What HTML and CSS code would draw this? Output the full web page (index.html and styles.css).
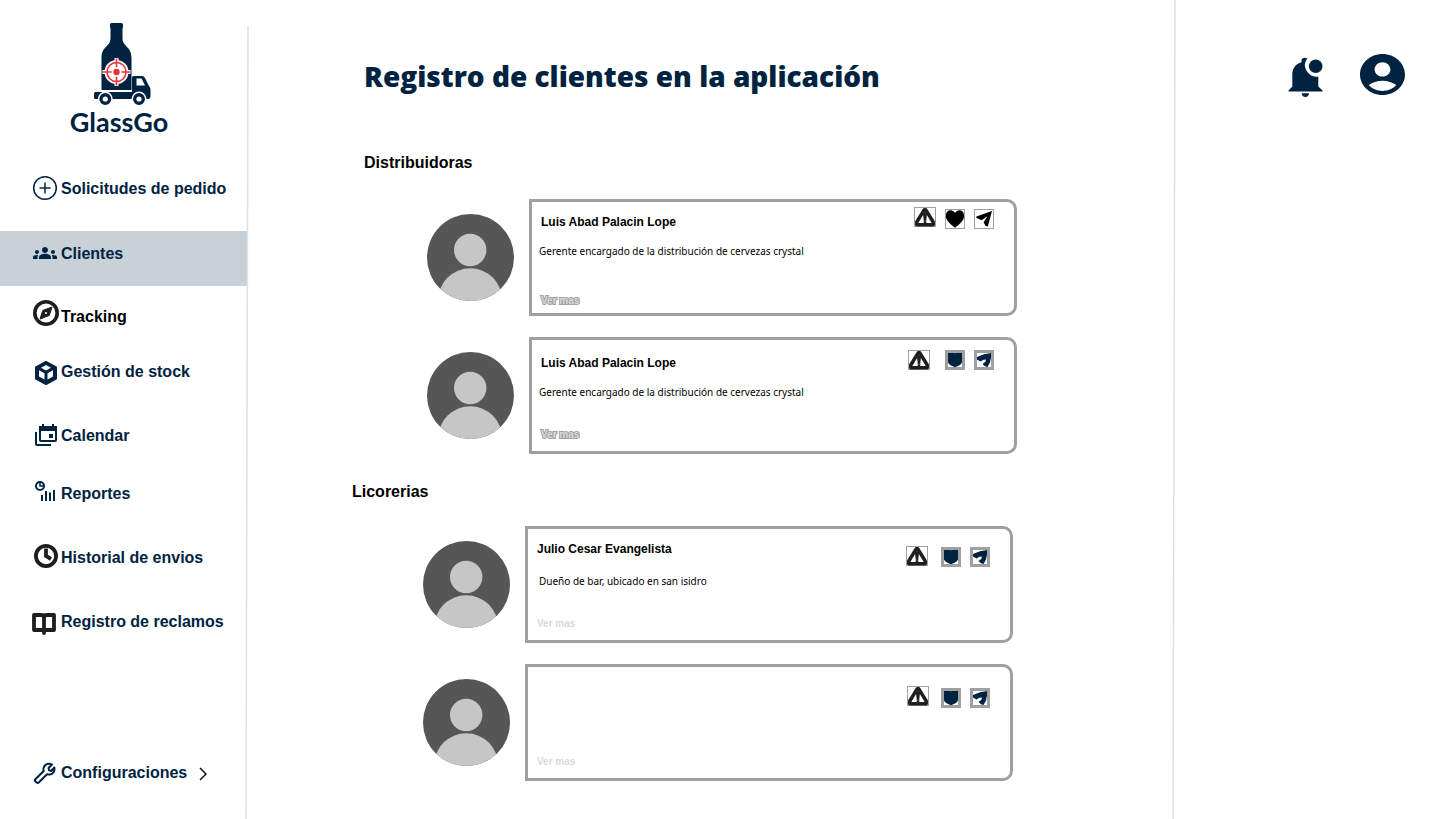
FILE: index.html
```html
<!DOCTYPE html>
<html lang="es">
<head>
<meta charset="utf-8">
<meta name="viewport" content="width=device-width, initial-scale=1">
<title>GlassGo - Clientes</title>
<link rel="stylesheet" href="styles.css">
</head>
<body>
<svg class="sprite" aria-hidden="true">
  <symbol id="avatar" viewBox="-0.5 0.5 88 88">
    <clipPath id="disc"><circle cx="44" cy="44" r="43.5"/></clipPath>
    <circle cx="44" cy="44" r="43.5" fill="#565656"/>
    <circle cx="43.7" cy="36.5" r="16.2" fill="#c6c6c6"/>
    <circle cx="43.7" cy="86.7" r="32" fill="#c6c6c6" clip-path="url(#disc)"/>
  </symbol>
  <symbol id="alert" viewBox="0 0 22 20">
    <path d="M10.200 2.800 2.800 15V17.800H19.200V15L11.800 2.800Z" fill="none" stroke="#1e1e1e" stroke-width="3.500" stroke-linejoin="round"/>
    <path d="M8.500 3H13.500L12.300 13V17H9.700V13Z" fill="#1e1e1e"/>
    <path d="M11 13.600v1.300M11 5.400v.7" stroke="#777" stroke-width="1"/>
  </symbol>
  <symbol id="heart" viewBox="0 0 20 20">
    <path d="M10 4C8.500 1.200 5.500 .8 3.500 1.700 1 3 .5 6.500 1.300 9.500 2.500 12.500 7 16.500 10 18.800 13 16.500 17.500 12.500 18.700 9.500 19.500 6.500 19 3 16.500 1.700 14.500.8 11.500 1.200 10 4Z"/>
  </symbol>
  <symbol id="shield" viewBox="0 0 20 20">
    <path d="M3 3H9.500L10 3.500 10.500 3H17V12.500C16 14.500 14.500 15.200 13.500 15.800L10 17.200 6.500 15.800C5.500 15.200 4 14.500 3 12.500Z"/>
  </symbol>
  <symbol id="send" viewBox="0 0 20 20">
    <path d="M18 2 13.800 17.500 11.600 17 9.600 13.300 13.500 7.300 7.500 11.200 2.300 8.800V7.600Z"/>
  </symbol>
  <symbol id="send-small" viewBox="0 0 20 20">
    <path d="M17 3V7.500L16 12.500 13.500 17 11 16.300 8.500 14 11.500 11.800 11.800 9.500 9.500 9.800 6.500 11.500 3 9.500V7L10 4.200Z"/>
  </symbol>
</svg>

<div class="app">
  <aside class="sidebar">
    <a class="brand" href="#">
      <svg class="brand-art" viewBox="0 0 58 84" aria-hidden="true">
        <g fill="#002341">
          <path d="M16 1.500Q16 0 17.500 0H27.500Q29 0 29 1.500V4Q29 5 28.500 5V15C28.500 24 37.500 23 37.500 35V67H7.500V35C7.500 23 16.500 24 16.500 15V5Q16 5 16 4Z"/>
          <path d="M1.500 69H38V54.500Q38 53 39.500 53H48Q50 53 51 55L55 63Q56.500 64.500 56.500 67V73Q56.500 76 54 76H1.500Q0 76 0 74.500V70.500Q0 69 1.500 69Z"/>
        </g>
        <path d="M42.500 55.500H47.500L51 62.500H42.500Z" fill="#fff"/>
        <g fill="#002341" stroke="#fff" stroke-width="1.500">
          <circle cx="11.300" cy="76" r="6.700"/><circle cx="45" cy="76" r="6.700"/>
        </g>
        <circle cx="11.300" cy="76" r="2.600" fill="#fff"/><circle cx="45" cy="76" r="2.600" fill="#fff"/>
        <circle cx="22.500" cy="49" r="12" fill="#fff"/>
        <path d="M22.500 35V63M8.500 49H36.500" stroke="#fff" stroke-width="4"/>
        <circle cx="22.500" cy="49" r="9.500" fill="none" stroke="#ee3338" stroke-width="1.600"/>
        <path d="M22.500 35.500V44M22.500 54V62.500M9 49H17.500M27.500 49H36" stroke="#ee3338" stroke-width="1.600"/>
        <circle cx="22.500" cy="49" r="3.200" fill="#ee3338"/>
      </svg>
      <span class="brand-name">GlassGo</span>
    </a>

    <nav class="nav">
      <a class="nav-item" href="#">
        <svg class="nav-icon" viewBox="0 0 28 28"><g fill="none" stroke="#002341" stroke-width="1.500"><circle cx="13" cy="14" r="11.300"/><path d="M13 8.500V19.500M7.500 14H18.500"/></g></svg>
        <span class="nav-label">Solicitudes de pedido</span>
      </a>
      <a class="nav-item nav-item--active" href="#" aria-current="page">
        <svg class="nav-icon" viewBox="0 0 28 28"><path transform="translate(1 2)" fill="#002341" d="M12 12.750c1.630 0 3.070.39 4.240.9 1.080.48 1.760 1.560 1.760 2.730V18H6v-1.610c0-1.180.68-2.260 1.760-2.730 1.170-.52 2.610-.91 4.240-.91zM4 13c1.100 0 2-.9 2-2s-.9-2-2-2-2 .9-2 2 .9 2 2 2zm1.130 1.100c-.37-.06-.74-.1-1.130-.1-.99 0-1.930.21-2.780.58C.48 14.900 0 15.620 0 16.430V18h4.500v-1.610c0-.83.23-1.610.63-2.290zM20 13c1.100 0 2-.9 2-2s-.9-2-2-2-2 .9-2 2 .9 2 2 2zm4 3.430c0-.81-.48-1.530-1.220-1.850-.85-.37-1.790-.58-2.780-.58-.39 0-.76.04-1.130.1.4.68.63 1.460.63 2.290V18H24v-1.570zM12 6c1.660 0 3 1.340 3 3s-1.340 3-3 3-3-1.340-3-3 1.340-3 3-3z"/></svg>
        <span class="nav-label">Clientes</span>
      </a>
      <a class="nav-item nav-item--dark nav-item--near" href="#">
        <svg class="nav-icon" viewBox="0 0 28 28"><circle cx="14" cy="11" r="11.200" fill="none" stroke="#1e1e1e" stroke-width="3.600"/><path d="M20 5 17.300 13.500 8 17 10.700 8.500Z" fill="#1e1e1e" stroke="#1e1e1e" stroke-linejoin="round"/><circle cx="14" cy="11" r="1.100" fill="#fff"/></svg>
        <span class="nav-label">Tracking</span>
      </a>
      <a class="nav-item nav-item--mid" href="#">
        <svg class="nav-icon" viewBox="0 0 28 28"><path d="M14 5 24 10.500V21.500L14 27 4 21.500V10.500Z" fill="#002341" stroke="#002341" stroke-width="2" stroke-linejoin="round"/><path d="M14 8 19 10.800 14 13.500 9 10.800ZM7 13.300 12.500 16.300V22.500L7 19.500ZM21 13.300 15.500 16.300V22.500L21 19.500Z" fill="#fff"/></svg>
        <span class="nav-label">Gestión de stock</span>
      </a>
      <a class="nav-item nav-item--far" href="#">
        <svg class="nav-icon" viewBox="0 0 28 28"><g fill="none" stroke="#002341" stroke-width="2"><rect x="8" y="6" width="16" height="14" rx="1"/><path d="M4 11V23Q4 24 5 24H19"/></g><path d="M7 5H25V10H7ZM10 3H12V6H10ZM20 3H22V6H20ZM17 13H21V17H17Z" fill="#002341"/></svg>
        <span class="nav-label">Calendar</span>
      </a>
      <a class="nav-item nav-item--open" href="#">
        <svg class="nav-icon" viewBox="0 0 28 28"><g fill="none" stroke="#002341" stroke-width="2"><circle cx="8" cy="7" r="4"/><path d="M8 3.500V7H11.500" stroke-width="1.500"/><path d="M10 16V22M14 12V22M18 13.500V22M22 11V22"/></g></svg>
        <span class="nav-label">Reportes</span>
      </a>
      <a class="nav-item nav-item--far" href="#">
        <svg class="nav-icon" viewBox="0 0 28 28"><g fill="none" stroke="#1e1e1e" stroke-width="3.800"><circle cx="14" cy="13" r="10.100"/><path d="M14 5.500V13L19 16"/></g></svg>
        <span class="nav-label">Historial de envios</span>
      </a>
      <a class="nav-item nav-item--far" href="#">
        <svg class="nav-icon" viewBox="0 0 28 28"><path d="M2 8H9Q12 8 12 10.500Q12 8 15 8H22V23H14Q12 23 12 25Q12 23 10 23H2ZM12 10V26" fill="none" stroke="#1e1e1e" stroke-width="3.800" stroke-linejoin="round" stroke-linecap="round"/></svg>
        <span class="nav-label">Registro de reclamos</span>
      </a>
      <a class="nav-item nav-item--bottom" href="#">
        <svg class="nav-icon" viewBox="0 0 28 28"><path d="M20 6.500 16.500 10 17 12.300 19.300 13 22.300 9.500C23.500 15 19 17.500 15 16.200L7 24.200C5 26 1.800 23 3.600 21L11.700 13C10.300 8.500 14.500 4 20 6.500Z" fill="none" stroke="#002341" stroke-width="2" stroke-linejoin="round"/></svg>
        <span class="nav-label">Configuraciones</span>
        <svg class="nav-chevron" viewBox="0 0 8 14"><path d="M1 1 7 7 1 13" fill="none" stroke="#111" stroke-width="1.500"/></svg>
      </a>
    </nav>
    <svg class="divider divider--nav" aria-hidden="true"><line x1="3" y1="0" x2="1" y2="100%"/></svg>
  </aside>

  <main class="main">
    <h1 class="title">Registro de clientes en la aplicación</h1>

    <section class="group group--first">
      <h2 class="group-title">Distribuidoras</h2>
      <div class="rows">
        <article class="row">
          <svg class="avatar" role="img" aria-label="Foto de perfil"><use href="#avatar"/></svg>
          <div class="card card--raised">
            <div class="card-body">
              <h3 class="name">Luis Abad Palacin Lope</h3>
              <p class="desc">Gerente encargado de la distribución de cervezas crystal</p>
              <button class="more more--outlined" type="button">Ver mas</button>
            </div>
            <div class="actions">
              <button class="action action--alert" type="button" aria-label="Alerta"><svg><use href="#alert"/></svg></button>
              <button class="action" type="button" aria-label="Favorito"><svg><use href="#heart"/></svg></button>
              <button class="action" type="button" aria-label="Enviar"><svg><use href="#send"/></svg></button>
            </div>
          </div>
        </article>
        <article class="row">
          <svg class="avatar" role="img" aria-label="Foto de perfil"><use href="#avatar"/></svg>
          <div class="card card--level">
            <div class="card-body">
              <h3 class="name">Luis Abad Palacin Lope</h3>
              <p class="desc">Gerente encargado de la distribución de cervezas crystal</p>
              <button class="more more--outlined" type="button">Ver mas</button>
            </div>
            <div class="actions">
              <button class="action action--alert" type="button" aria-label="Alerta"><svg><use href="#alert"/></svg></button>
              <button class="action action--thick" type="button" aria-label="Favorito"><svg><use href="#shield"/></svg></button>
              <button class="action action--thick" type="button" aria-label="Enviar"><svg><use href="#send-small"/></svg></button>
            </div>
          </div>
        </article>
      </div>
    </section>

    <section class="group group--second">
      <h2 class="group-title">Licorerias</h2>
      <div class="rows">
        <article class="row">
          <svg class="avatar" role="img" aria-label="Foto de perfil"><use href="#avatar"/></svg>
          <div class="card card--store">
            <div class="card-body">
              <h3 class="name">Julio Cesar Evangelista</h3>
              <p class="desc">Dueño de bar, ubicado en san isidro</p>
              <button class="more" type="button">Ver mas</button>
            </div>
            <div class="actions">
              <button class="action action--alert" type="button" aria-label="Alerta"><svg><use href="#alert"/></svg></button>
              <button class="action action--thick" type="button" aria-label="Favorito"><svg><use href="#shield"/></svg></button>
              <button class="action action--thick" type="button" aria-label="Enviar"><svg><use href="#send-small"/></svg></button>
            </div>
          </div>
        </article>
        <article class="row">
          <svg class="avatar" role="img" aria-label="Foto de perfil"><use href="#avatar"/></svg>
          <div class="card card--store card--empty">
            <div class="card-body">
              <button class="more" type="button">Ver mas</button>
            </div>
            <div class="actions">
              <button class="action action--alert" type="button" aria-label="Alerta"><svg><use href="#alert"/></svg></button>
              <button class="action action--thick" type="button" aria-label="Favorito"><svg><use href="#shield"/></svg></button>
              <button class="action action--thick" type="button" aria-label="Enviar"><svg><use href="#send-small"/></svg></button>
            </div>
          </div>
        </article>
      </div>
    </section>
  </main>

  <aside class="tools">
    <svg class="divider divider--tools" aria-hidden="true"><line x1="3" y1="0" x2="1" y2="100%"/></svg>
    <button class="tool" type="button" aria-label="Notificaciones">
      <svg class="tool-bell" viewBox="0 0 36 42"><g fill="#002341"><path d="M.5 34.600V33.500L4.300 29.500V18C4.300 11.500 7.500 7 13.500 5.300V3.500C13.500.8 16.500 0 19.300 1.300A11.500 11.500 0 0 0 30.300 19.500V29.500L34.600 33.500V34.600Z"/><path d="M13.700 36.300H21C21 38.500 19.500 40 17.400 40S13.700 38.500 13.700 36.300Z"/><circle cx="27.700" cy="9.300" r="6.800"/></g></svg>
    </button>
    <button class="tool" type="button" aria-label="Mi cuenta">
      <svg class="tool-user" viewBox="2 2 20 20" preserveAspectRatio="none"><path fill="#002341" d="M12 2C6.480 2 2 6.480 2 12s4.480 10 10 10 10-4.480 10-10S17.520 2 12 2zm0 4c1.930 0 3.500 1.570 3.500 3.500S13.930 13 12 13s-3.500-1.570-3.500-3.500S10.070 6 12 6zm0 14c-2.030 0-4.430-.82-6.140-2.880C7.550 15.800 9.680 15 12 15s4.450.8 6.140 2.120C16.430 19.180 14.030 20 12 20z"/></svg>
    </button>
  </aside>
</div>
</body>
</html>
```

FILE: styles.css
```css
* {
  box-sizing: border-box;
}

body {
  margin: 0;
  background: #fff;
  color: #000;
  font-family: "Liberation Sans", Arial, sans-serif;
}

h1,
h2,
h3,
p {
  margin: 0;
}

button {
  border: 0;
  padding: 0;
  background: none;
  font: inherit;
  cursor: pointer;
}

svg {
  display: block;
}

.sprite {
  position: absolute;
  width: 0;
  height: 0;
}

.app {
  display: grid;
  grid-template-columns: 247px 1fr 267px;
  min-height: 100vh;
}

/* Sidebar */
.sidebar {
  position: relative;
  display: flex;
  flex-direction: column;
  padding: 23px 0 33px;
}

.divider {
  position: absolute;
  bottom: 0;
  width: 4px;
  height: 100%;
  stroke: #e0e0e0;
  stroke-width: 1.5px;
}

.divider--nav {
  right: -2px;
  height: calc(100% - 26px);
}

.divider--tools {
  left: -1px;
}

.brand {
  display: flex;
  flex-direction: column;
  align-items: center;
  margin-right: 9px;
  color: #002341;
  text-decoration: none;
}

.brand-art {
  width: 58px;
  height: 84px;
  margin-left: 8px;
}

.brand-name {
  font: 700 27px/30px Lato, sans-serif;
}

.nav {
  display: flex;
  flex: 1;
  flex-direction: column;
  margin-top: 37px;
}

.nav-item {
  display: flex;
  align-items: center;
  gap: 1px;
  padding-left: 32px;
  color: #002341;
  font-size: 16px;
  font-weight: 700;
  line-height: 26px;
  text-decoration: none;
}

.nav-label {
  padding-top: 2px;
}

.nav-icon {
  flex: none;
  width: 28px;
  height: 28px;
  overflow: visible;
}

.nav-item--active {
  margin-top: 29px;
  padding-top: 8px;
  padding-bottom: 19px;
  background: #c8d0d8;
}

.nav-item--dark {
  color: #000;
}

.nav-item--near {
  margin-top: 16px;
}

.nav-item--mid {
  margin-top: 27px;
}

.nav-item--open {
  margin-top: 30px;
}

.nav-item--far {
  margin-top: 36px;
}

.nav-item--bottom {
  margin-top: auto;
}

.nav-chevron {
  width: 8px;
  height: 14px;
  margin: 4px 0 0 11px;
}

/* Client list */
.main {
  padding: 56px 0 38px;
}

.title {
  padding-left: 117px;
  color: #002341;
  font: 800 28px/40px "Open Sans", sans-serif;
}

.group-title {
  font-size: 16px;
  font-weight: 700;
  line-height: 20px;
}

.group--first {
  margin-top: 57px;
  padding: 0 156px 0 117px;
}

.group--second {
  margin-top: 28px;
  padding: 0 160px 0 105px;
}

.rows {
  display: grid;
  gap: 21px;
}

.group--first .rows {
  margin: 26px 0 0 62px;
}

.group--second .rows {
  margin: 24px 0 0 70px;
}

.row {
  display: flex;
  align-items: center;
  gap: 15px;
}

.avatar {
  flex: none;
  width: 88px;
  height: 88px;
}

.card {
  display: flex;
  flex: 1;
  justify-content: space-between;
  min-height: 117px;
  border: 3px solid #a0a0a0;
  border-radius: 0 10px 10px 0;
}

.card-body {
  display: flex;
  flex-direction: column;
  align-items: flex-start;
  padding: 12px 0 8px 9px;
}

.name {
  font-size: 12px;
  font-weight: 700;
  line-height: 16px;
}

.desc {
  margin: 13px 0 0 -2px;
  font: 400 10px/16px "Noto Sans", sans-serif;
}

.more {
  margin-top: auto;
  color: #d9d9d9;
  font-size: 10px;
  font-weight: 700;
  line-height: 16px;
}

.more--outlined {
  -webkit-text-stroke: 2px #a0a0a0;
  paint-order: stroke fill;
}

.actions {
  display: flex;
  align-items: flex-start;
  gap: 9px;
  padding: 7px 20px 0 0;
}

.action {
  width: 20px;
  height: 20px;
  border: 1px solid #a0a0a0;
  color: #000;
  fill: currentColor;
}

.action svg {
  width: 20px;
  height: 20px;
  margin: -1px;
}

.action--alert {
  width: 22px;
}

.action--alert svg {
  width: 22px;
}

.action--thick {
  border-width: 3px;
  color: #002341;
}

.action--thick svg {
  margin: -3px;
}

.card--raised .card-body {
  padding-bottom: 4px;
}

.card--raised .action--alert {
  margin-top: -2px;
}

.card--level .card-body {
  padding-top: 15px;
}

.card--level .actions {
  padding-top: 10px;
}

.card--level .action--alert {
  margin-right: 6px;
}

.card--store .desc {
  margin: 16px 0 0 2px;
}

.card--store .actions {
  padding-top: 18px;
}

.card--store .action--alert {
  margin: -1px 4px 0 0;
}

.card--empty .actions {
  padding-top: 21px;
}

.card--empty .action--alert {
  margin: -2px 3px 0 0;
}

/* Account tools */
.tools {
  position: relative;
  display: flex;
  align-items: flex-start;
  justify-content: flex-end;
  gap: 36px;
  padding: 54px 35px 0 0;
}

.tool-bell {
  width: 36px;
  height: 42px;
  margin-top: 3px;
}

.tool-user {
  width: 45px;
  height: 41px;
}
```
